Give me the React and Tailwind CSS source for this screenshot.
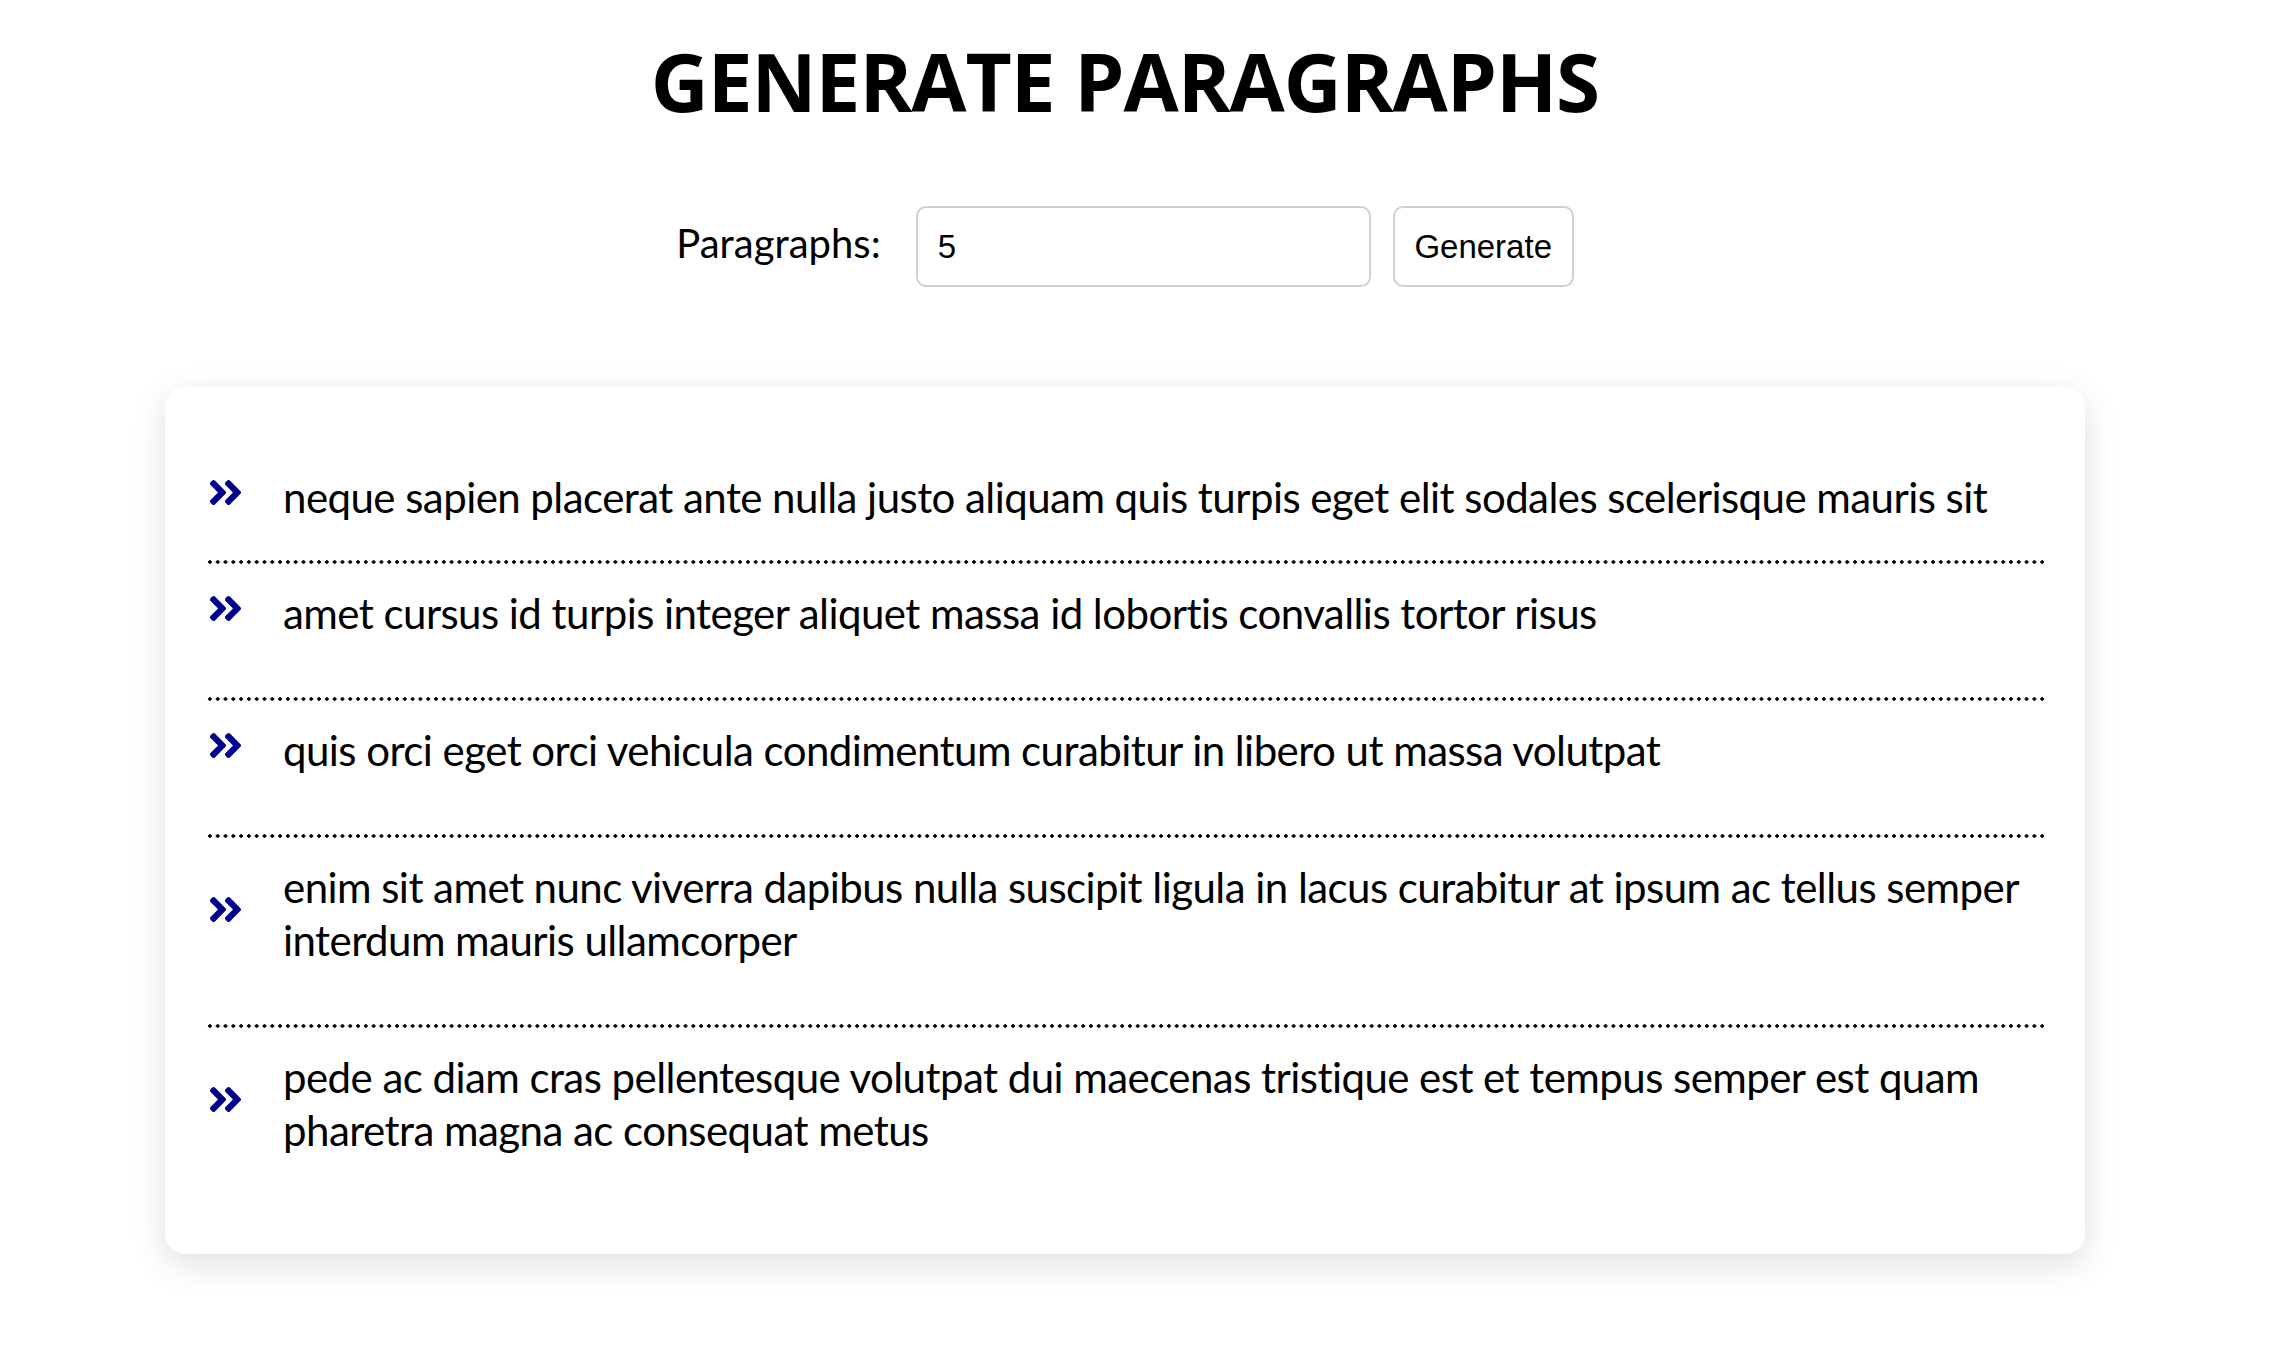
import React from "react";

const items = [
  ["neque sapien placerat ante nulla justo aliquam quis turpis eget elit sodales scelerisque mauris sit"],
  ["amet cursus id turpis integer aliquet massa id lobortis convallis tortor risus"],
  ["quis orci eget orci vehicula condimentum curabitur in libero ut massa volutpat"],
  [
    "enim sit amet nunc viverra dapibus nulla suscipit ligula in lacus curabitur at ipsum ac tellus semper",
    "interdum mauris ullamcorper",
  ],
  [
    "pede ac diam cras pellentesque volutpat dui maecenas tristique est et tempus semper est quam",
    "pharetra magna ac consequat metus",
  ],
];

function Chevrons() {
  return (
    <svg width="31" height="25" viewBox="25 96 398 320" className="block">
      <path
        fill="#00008b"
        d="M224.3 273l-136 136c-9.4 9.4-24.6 9.4-33.9 0l-22.6-22.6c-9.4-9.4-9.4-24.6 0-33.9l96.4-96.4-96.4-96.4c-9.4-9.4-9.4-24.6 0-33.9L54.3 103c9.4-9.4 24.6-9.4 33.9 0l136 136c9.5 9.4 9.5 24.6.1 34zm192-34l-136-136c-9.4-9.4-24.6-9.4-33.9 0l-22.6 22.6c-9.4 9.4-9.4 24.6 0 33.9l96.4 96.4-96.4 96.4c-9.4 9.4-9.4 24.6 0 33.9l22.6 22.6c9.4 9.4 24.6 9.4 33.9 0l136-136c9.4-9.2 9.4-24.4 0-33.8z"
      />
    </svg>
  );
}

function Divider() {
  return (
    <div className="h-[4px] w-full bg-[radial-gradient(circle,#000_1.5px,transparent_2px)] bg-[length:7.8px_4px] bg-repeat-x" />
  );
}

export default function App() {
  return (
    <div className="w-[2250px] min-h-[1362px] bg-white flex flex-col items-center font-['Lato',sans-serif] text-black">
      <h1 className="mt-[41px] text-[80px] leading-[80px] font-bold tracking-[-1px] font-['Open_Sans',sans-serif]">
        GENERATE PARAGRAPHS
      </h1>

      <div className="mt-[85px] flex items-center">
        <label className="text-[40px] leading-[40px] mb-[8px]">Paragraphs:</label>
        <div className="ml-[35px] w-[455px] h-[81px] border-2 border-[#cfcfcf] rounded-[10px] flex items-center pl-[20px] font-['Liberation_Sans',Arial,sans-serif] text-[33px]">
          5
        </div>
        <button className="ml-[22px] w-[181px] h-[81px] border-2 border-[#cfcfcf] rounded-[10px] bg-white font-['Liberation_Sans',Arial,sans-serif] text-[33px] text-black">
          Generate
        </button>
      </div>

      <div className="mt-[100px] w-[1920px] bg-white rounded-[20px] shadow-[0_10px_35px_rgba(0,0,0,0.13)] px-[41px] py-[40px]">
        {items.map((lines, i) => (
          <div key={i}>
            {i > 0 && <Divider />}
            <div
              className={
                i === 0
                  ? "flex items-center pt-[44px] pb-[36px]"
                  : "flex items-center pt-[23px] pb-[57px]"
              }
            >
              <div className="w-[77px] shrink-0 pl-[4px] mb-[10px]">
                <Chevrons />
              </div>
              <p className="text-[42px] leading-[53px] tracking-[-0.55px] whitespace-nowrap">
                {lines.map((l, j) => (
                  <React.Fragment key={j}>
                    {j > 0 && <br />}
                    {l}
                  </React.Fragment>
                ))}
              </p>
            </div>
          </div>
        ))}
      </div>
    </div>
  );
}
